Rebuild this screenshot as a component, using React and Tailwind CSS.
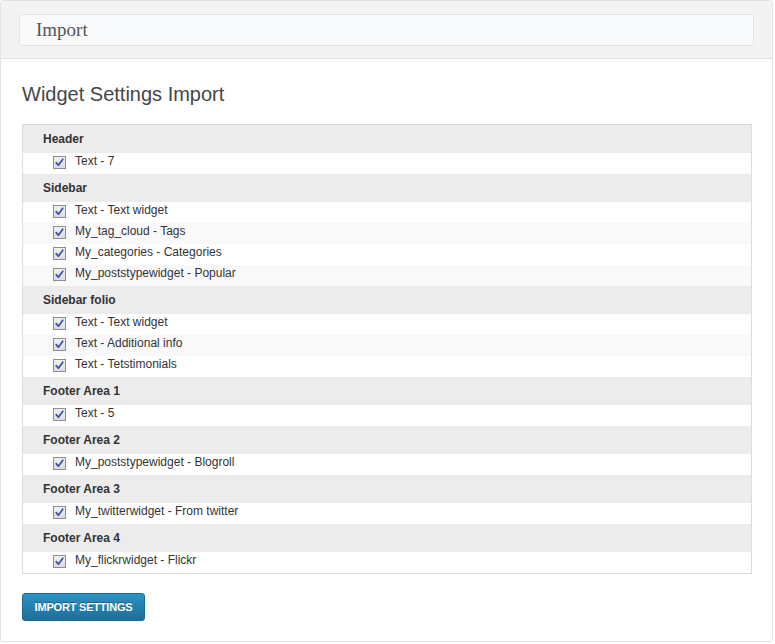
import React from "react";

const groups = [
  { name: "Header", items: ["Text - 7"] },
  {
    name: "Sidebar",
    items: [
      "Text - Text widget",
      "My_tag_cloud - Tags",
      "My_categories - Categories",
      "My_poststypewidget - Popular",
    ],
  },
  {
    name: "Sidebar folio",
    items: ["Text - Text widget", "Text - Additional info", "Text - Tetstimonials"],
  },
  { name: "Footer Area 1", items: ["Text - 5"] },
  { name: "Footer Area 2", items: ["My_poststypewidget - Blogroll"] },
  { name: "Footer Area 3", items: ["My_twitterwidget - From twitter"] },
  { name: "Footer Area 4", items: ["My_flickrwidget - Flickr"] },
];

function Check() {
  return (
    <span className="mt-[3px] flex h-[13px] w-[13px] shrink-0 items-center justify-center border border-[#8f8f8f] bg-gradient-to-b from-[#f0f0f0] to-[#d8dde3]">
      <svg width="9" height="9" viewBox="0 0 9 9">
        <path d="M1.2 4.6 L3.4 7.2 L7.8 1.2" fill="none" stroke="#3b4fa8" strokeWidth="1.7" strokeLinecap="round" strokeLinejoin="round" />
      </svg>
    </span>
  );
}

export default function App() {
  return (
    <div className="h-[644px] w-[775px] bg-white" style={{ fontFamily: '"Liberation Sans", Arial, sans-serif' }}>
      <div className="h-[642px] w-[773px] overflow-hidden rounded-[3px] border border-[#e2e2e2] bg-white">
        <div className="border-b border-[#e0e0e0] bg-[#f3f3f3] px-[18px] pb-[12px] pt-[13px]">
          <div
            className="flex h-[32px] items-center rounded-[3px] border border-[#e3e3e3] bg-[#f8f9fa] px-[16px] text-[19px] text-[#555]"
            style={{ fontFamily: '"Liberation Serif", "Times New Roman", serif' }}
          >
            Import
          </div>
        </div>
        <div className="px-[21px] pt-[23px]">
          <h2 className="text-[20px] leading-[24px] text-[#464646]">Widget Settings Import</h2>
          <div className="mt-[18px] w-[730px] border border-[#dcdcdc]">
            {groups.map((g) => (
              <div key={g.name}>
                <div className="flex h-[28px] items-center bg-[#ececec] pl-[20px] text-[12px] font-bold text-[#333]">
                  {g.name}
                </div>
                {g.items.map((it, i) => (
                  <div
                    key={it}
                    className={`flex h-[21px] items-start gap-[9px] pl-[30px] text-[12px] text-[#333] ${i % 2 === 1 ? "bg-[#f9f9f9]" : "bg-white"}`}
                  >
                    <Check />
                    <span className="leading-[17px]">{it}</span>
                  </div>
                ))}
              </div>
            ))}
          </div>
          <button className="mt-[19px] h-[28px] w-[123px] rounded-[3px] border border-[#1b6a93] bg-gradient-to-b from-[#2d93c2] to-[#1d6f99] text-[11px] font-bold tracking-[-0.2px] text-white [text-shadow:0_-1px_0_rgba(0,0,0,0.3)]">
            IMPORT SETTINGS
          </button>
        </div>
      </div>
    </div>
  );
}
